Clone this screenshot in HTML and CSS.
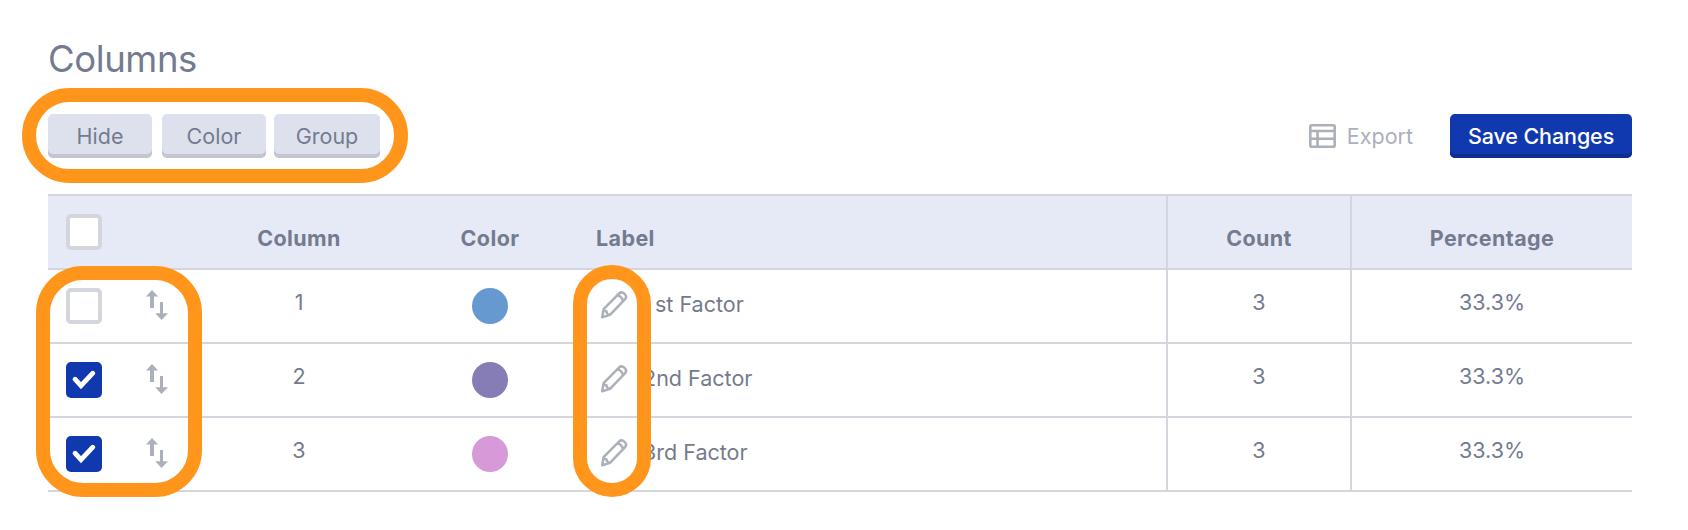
FILE: index.html
```html
<!DOCTYPE html>
<html lang="en">

<head>
    <meta charset="UTF-8">
    <title>Columns</title>
    <meta name="viewport" content="width=device-width, initial-scale=1">
    <link rel="stylesheet" href="styles.css">
</head>

<body>

    <!-- shared icons -->
    <svg class="icon-defs" width="0" height="0">
        <symbol id="icon-sort" viewBox="0 0 22 30">
            <path d="M6 0 L12.2 6.5 H8 V18 H4 V6.5 H0 Z" />
            <path d="M14 12 H17 V23.3 H22 L15.5 30 L9.3 23.3 H14 Z" />
        </symbol>
        <symbol id="icon-pencil" viewBox="0 0 28 30">
            <path d="M2.2 27.2 L3.6 19.2 L19.2 3.3 C22.5 0.5 28.2 5.6 25.1 9.2 L10 24.9 Z M17 5.6 C20 5.4 23 8.3 22.7 11.6 M3.6 19.2 C4.2 21 4.8 21.3 6.4 21.3 C6.5 23.6 7.5 24.6 10 24.9" />
        </symbol>
        <symbol id="icon-check" viewBox="0 0 36 36">
            <path d="M9 17.2 L15 23.7 L26.8 11.2" />
        </symbol>
    </svg>

    <main class="page">
        <h1>Columns</h1>

        <div class="toolbar">
            <div class="bulk-actions">
                <button class="btn btn-hide">Hide</button>
                <button class="btn btn-color">Color</button>
                <button class="btn btn-group">Group</button>
                <span class="highlight highlight-actions"></span>
            </div>
            <div class="page-actions">
                <button class="export">
                    <svg class="icon-table" viewBox="0 0 27 24">
                        <rect x="1.3" y="1.3" width="24.4" height="21.4" rx="1.5" />
                        <path d="M1 7 H26 M8.5 7 V23 M1 14.7 H26" />
                    </svg>
                    Export
                </button>
                <button class="btn btn-save">Save Changes</button>
            </div>
        </div>

        <div class="table-wrap">
            <table>
                <colgroup>
                    <col class="col-check">
                    <col class="col-sort">
                    <col class="col-number">
                    <col class="col-color">
                    <col class="col-label">
                    <col class="col-count">
                    <col class="col-percent">
                </colgroup>
                <thead>
                    <tr>
                        <th class="check"><span class="checkbox"></span></th>
                        <th></th>
                        <th>Column</th>
                        <th>Color</th>
                        <th class="label">Label</th>
                        <th class="divided">Count</th>
                        <th class="divided">Percentage</th>
                    </tr>
                </thead>
                <tbody>
                    <tr>
                        <td class="check"><span class="checkbox"></span></td>
                        <td class="sort"><svg class="icon-sort"><use href="#icon-sort" /></svg></td>
                        <td>1</td>
                        <td class="color"><span class="dot dot-blue"></span></td>
                        <td class="label"><div class="label-inner"><svg class="icon-pencil"><use href="#icon-pencil" /></svg><span><span class="digit">1</span>st Factor</span></div></td>
                        <td class="divided">3</td>
                        <td class="divided">33.3%</td>
                    </tr>
                    <tr>
                        <td class="check"><span class="checkbox checked"><svg><use href="#icon-check" /></svg></span></td>
                        <td class="sort"><svg class="icon-sort"><use href="#icon-sort" /></svg></td>
                        <td>2</td>
                        <td class="color"><span class="dot dot-purple"></span></td>
                        <td class="label"><div class="label-inner"><svg class="icon-pencil"><use href="#icon-pencil" /></svg><span><span class="digit">2</span>nd Factor</span></div></td>
                        <td class="divided">3</td>
                        <td class="divided">33.3%</td>
                    </tr>
                    <tr>
                        <td class="check"><span class="checkbox checked"><svg><use href="#icon-check" /></svg></span></td>
                        <td class="sort"><svg class="icon-sort"><use href="#icon-sort" /></svg></td>
                        <td>3</td>
                        <td class="color"><span class="dot dot-pink"></span></td>
                        <td class="label"><div class="label-inner"><svg class="icon-pencil"><use href="#icon-pencil" /></svg><span><span class="digit">3</span>rd Factor</span></div></td>
                        <td class="divided">3</td>
                        <td class="divided">33.3%</td>
                    </tr>
                </tbody>
            </table>
            <span class="highlight highlight-rows"></span>
            <span class="highlight highlight-edit"></span>
        </div>
    </main>

</body>

</html>
```
FILE: styles.css
```css
* {
    box-sizing: border-box;
}

body {
    margin: 0;
    min-height: 100vh;
    background: #fff;
    font-family: Inter, "Liberation Sans", sans-serif;
    font-size: 21.5px;
    font-weight: 420;
    color: #747b8f;
}

.icon-defs {
    display: block;
}

.page {
    width: 1584px;
    min-height: 530px;
    margin-left: 48px;
    padding-top: 36px;
}

h1 {
    margin: 0;
    height: 78px;
    font-size: 36.5px;
    font-weight: 400;
    line-height: 46px;
    letter-spacing: -0.4px;
}

.toolbar {
    display: flex;
    justify-content: space-between;
    height: 80px;
}

.bulk-actions {
    position: relative;
    display: flex;
    align-items: flex-start;
}

.btn,
.export {
    height: 44px;
    padding: 0;
    border: none;
    font-family: inherit;
    font-size: 21.5px;
    font-weight: 430;
    color: #747b8f;
    cursor: pointer;
}

.btn {
    width: 104px;
    border-radius: 5px;
    background: #dde1ee;
    box-shadow: inset 0 -4px 0 #c3c6d0;
}

.btn-color {
    margin-left: 10px;
}

.btn-group {
    width: 106px;
    margin-left: 8px;
}

.page-actions {
    display: flex;
    align-items: flex-start;
    gap: 37px;
}

.export {
    display: flex;
    align-items: center;
    gap: 11px;
    background: none;
    color: #acb0bb;
}

.icon-table {
    width: 27px;
    height: 24px;
    fill: none;
    stroke: #acb0bb;
    stroke-width: 2.6;
}

.btn-save {
    width: 182px;
    background: #1039af;
    box-shadow: inset 0 -4px 0 #0e2f90;
    color: #fff;
    font-weight: 500;
    letter-spacing: -0.1px;
}

.table-wrap {
    position: relative;
}

table {
    width: 100%;
    table-layout: fixed;
    border-spacing: 0;
    border-top: 2px solid #d4d6dd;
}

.col-check {
    width: 72px;
}

.col-sort {
    width: 74px;
}

.col-number {
    width: 210px;
}

.col-color {
    width: 172px;
}

.col-label {
    width: 590px;
}

.col-count {
    width: 184px;
}

.col-percent {
    width: 282px;
}

th,
td {
    height: 74px;
    padding: 19px 0 0;
    border-bottom: 2px solid #d4d6dd;
    line-height: 26px;
    text-align: center;
    vertical-align: top;
}

th {
    padding-top: 29px;
    background: #e6eaf7;
    font-weight: 700;
    letter-spacing: 0.4px;
}

.divided {
    border-left: 2px solid #d4d6dd;
}

.check,
.color {
    padding-top: 18px;
}

.check {
    padding-left: 18px;
}

.checkbox {
    display: block;
    width: 36px;
    height: 36px;
    border: 4px solid #d4d6dd;
    border-radius: 5px;
    background: #fff;
}

.checkbox.checked {
    border: none;
    background: #1039af;
}

.checkbox svg {
    display: block;
    width: 36px;
    height: 36px;
    fill: none;
    stroke: #fff;
    stroke-width: 4.8;
    stroke-linecap: round;
}

.sort {
    padding-top: 20px;
}

.icon-sort {
    display: block;
    width: 22px;
    height: 30px;
    margin: 0 auto;
    fill: #acb0bb;
}

.dot {
    display: block;
    width: 36px;
    height: 36px;
    margin: 0 auto;
    border-radius: 50%;
}

.dot-blue {
    background: #6599cf;
}

.dot-purple {
    background: #877db6;
}

.dot-pink {
    background: #d799d8;
}

.label {
    padding-left: 20px;
    text-align: left;
}

.label-inner {
    display: flex;
    gap: 15px;
    padding: 2px 0 0 4px;
}

.digit {
    display: inline-block;
    min-width: 12px;
}

.icon-pencil {
    width: 28px;
    height: 30px;
    margin-top: -1px;
    fill: none;
    stroke: #acb0bb;
    stroke-width: 2.5;
    stroke-linejoin: round;
}

/* callout rings drawn over the page */
.highlight {
    position: absolute;
    border: 14px solid #ff961b;
    pointer-events: none;
}

.highlight-actions {
    top: -26px;
    left: -26px;
    width: 386px;
    height: 95px;
    border-radius: 48px;
}

.highlight-rows {
    top: 72px;
    left: -12px;
    width: 166px;
    height: 231px;
    border-radius: 47px;
}

.highlight-edit {
    top: 71px;
    left: 525px;
    width: 78px;
    height: 232px;
    border-radius: 39px;
}
```
